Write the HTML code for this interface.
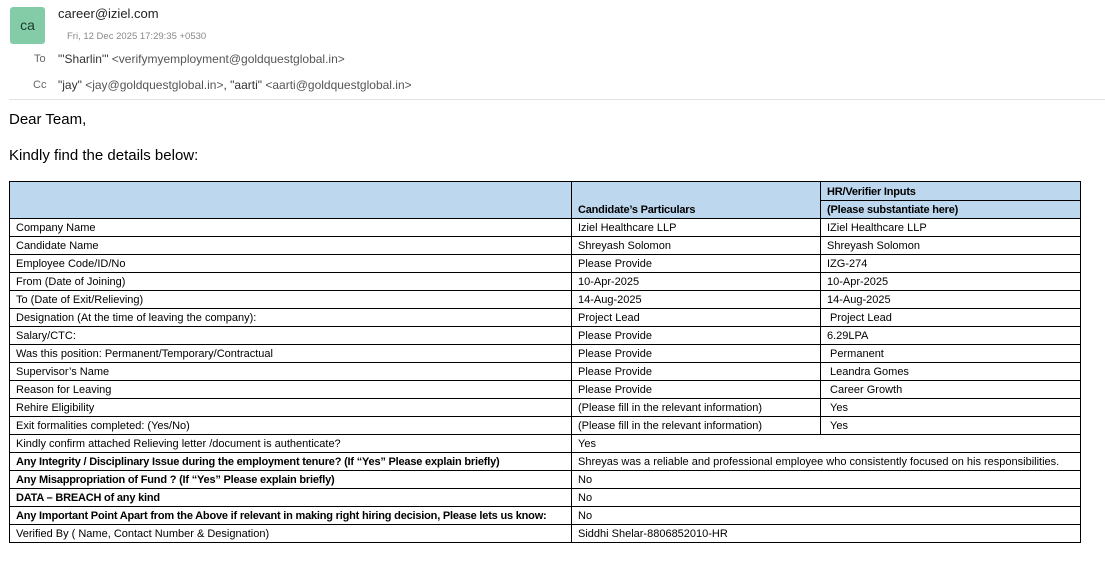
<!DOCTYPE html>
<html><head><meta charset="utf-8"><style>
body{margin:0;background:#fff;font-family:"Liberation Sans",sans-serif;color:#222;width:1105px;height:567px;overflow:hidden;position:relative}
.a{position:absolute;white-space:nowrap}
.av{left:10px;top:7px;width:35px;height:37px;background:#83cca7;border-radius:3px;font-size:14px;line-height:37px;text-align:center;color:#1e3a2c}
table{position:absolute;left:9px;top:181px;border-collapse:collapse;font-size:11px;color:#000;table-layout:fixed}
td{border:1px solid #000;height:15px;padding:1px 6px 0 6px;white-space:nowrap;overflow:hidden;line-height:16px}
.h{background:#bdd7ee;font-weight:bold}
b{letter-spacing:-0.2px}
</style></head><body>
<div class="a av">ca</div>
<div class="a" style="left:58px;top:6px;font-size:13px;color:#222">career@iziel.com</div>
<div class="a" style="left:67px;top:31px;font-size:9.5px;color:#888">Fri, 12 Dec 2025 17:29:35 +0530</div>
<div class="a" style="left:34px;top:53px;font-size:11px;color:#666">To</div>
<div class="a" style="left:58px;top:52px;font-size:12px;color:#333">"'Sharlin'" <span style="color:#555">&lt;verifymyemployment@goldquestglobal.in&gt;</span></div>
<div class="a" style="left:33px;top:79px;font-size:11px;color:#666">Cc</div>
<div class="a" style="left:58px;top:78px;font-size:12px;color:#333">"jay" <span style="color:#555">&lt;jay@goldquestglobal.in&gt;</span>, "aarti" <span style="color:#555">&lt;aarti@goldquestglobal.in&gt;</span></div>
<div class="a" style="left:9px;top:99px;width:1096px;height:1px;background:#e2e2e2"></div>
<div class="a" style="left:9px;top:111px;font-size:15px;color:#000">Dear Team,</div>
<div class="a" style="left:9px;top:147px;font-size:15px;color:#000">Kindly find the details below:</div>
<table>
<colgroup><col style="width:562px"><col style="width:249px"><col style="width:260px"></colgroup>
<tr><td class="h" rowspan="2" style="height:34px"></td><td class="h" rowspan="2" style="vertical-align:bottom"><b>Candidate’s Particulars</b></td><td class="h" style="padding-top:2px;height:15px;line-height:16px"><b>HR/Verifier Inputs</b></td></tr>
<tr><td class="h"><b>(Please substantiate here)</b></td></tr>
<tr><td>Company Name</td><td>Iziel Healthcare LLP</td><td>IZiel Healthcare LLP</td></tr>
<tr><td>Candidate Name</td><td>Shreyash Solomon</td><td>Shreyash Solomon</td></tr>
<tr><td>Employee Code/ID/No</td><td>Please Provide</td><td>IZG-274</td></tr>
<tr><td>From (Date of Joining)</td><td>10-Apr-2025</td><td>10-Apr-2025</td></tr>
<tr><td>To (Date of Exit/Relieving)</td><td>14-Aug-2025</td><td>14-Aug-2025</td></tr>
<tr><td>Designation (At the time of leaving the company):</td><td>Project Lead</td><td>&nbsp;Project Lead</td></tr>
<tr><td>Salary/CTC:</td><td>Please Provide</td><td>6.29LPA</td></tr>
<tr><td>Was this position: Permanent/Temporary/Contractual</td><td>Please Provide</td><td>&nbsp;Permanent</td></tr>
<tr><td>Supervisor’s Name</td><td>Please Provide</td><td>&nbsp;Leandra Gomes</td></tr>
<tr><td>Reason for Leaving</td><td>Please Provide</td><td>&nbsp;Career Growth</td></tr>
<tr><td>Rehire Eligibility</td><td>(Please fill in the relevant information)</td><td>&nbsp;Yes</td></tr>
<tr><td>Exit formalities completed: (Yes/No)</td><td>(Please fill in the relevant information)</td><td>&nbsp;Yes</td></tr>
<tr><td>Kindly confirm attached Relieving letter /document is authenticate?</td><td colspan="2">Yes</td></tr>
<tr><td><b>Any Integrity / Disciplinary Issue during the employment tenure? (If “Yes” Please explain briefly)</b></td><td colspan="2">Shreyas was a reliable and professional employee who consistently focused on his responsibilities.</td></tr>
<tr><td><b>Any Misappropriation of Fund ? (If “Yes” Please explain briefly)</b></td><td colspan="2">No</td></tr>
<tr><td><b>DATA – BREACH of any kind</b></td><td colspan="2">No</td></tr>
<tr><td><b>Any Important Point Apart from the Above if relevant in making right hiring decision, Please lets us know:</b></td><td colspan="2">No</td></tr>
<tr><td>Verified By ( Name, Contact Number &amp; Designation)</td><td colspan="2">Siddhi Shelar-8806852010-HR</td></tr>
</table>
</body></html>
